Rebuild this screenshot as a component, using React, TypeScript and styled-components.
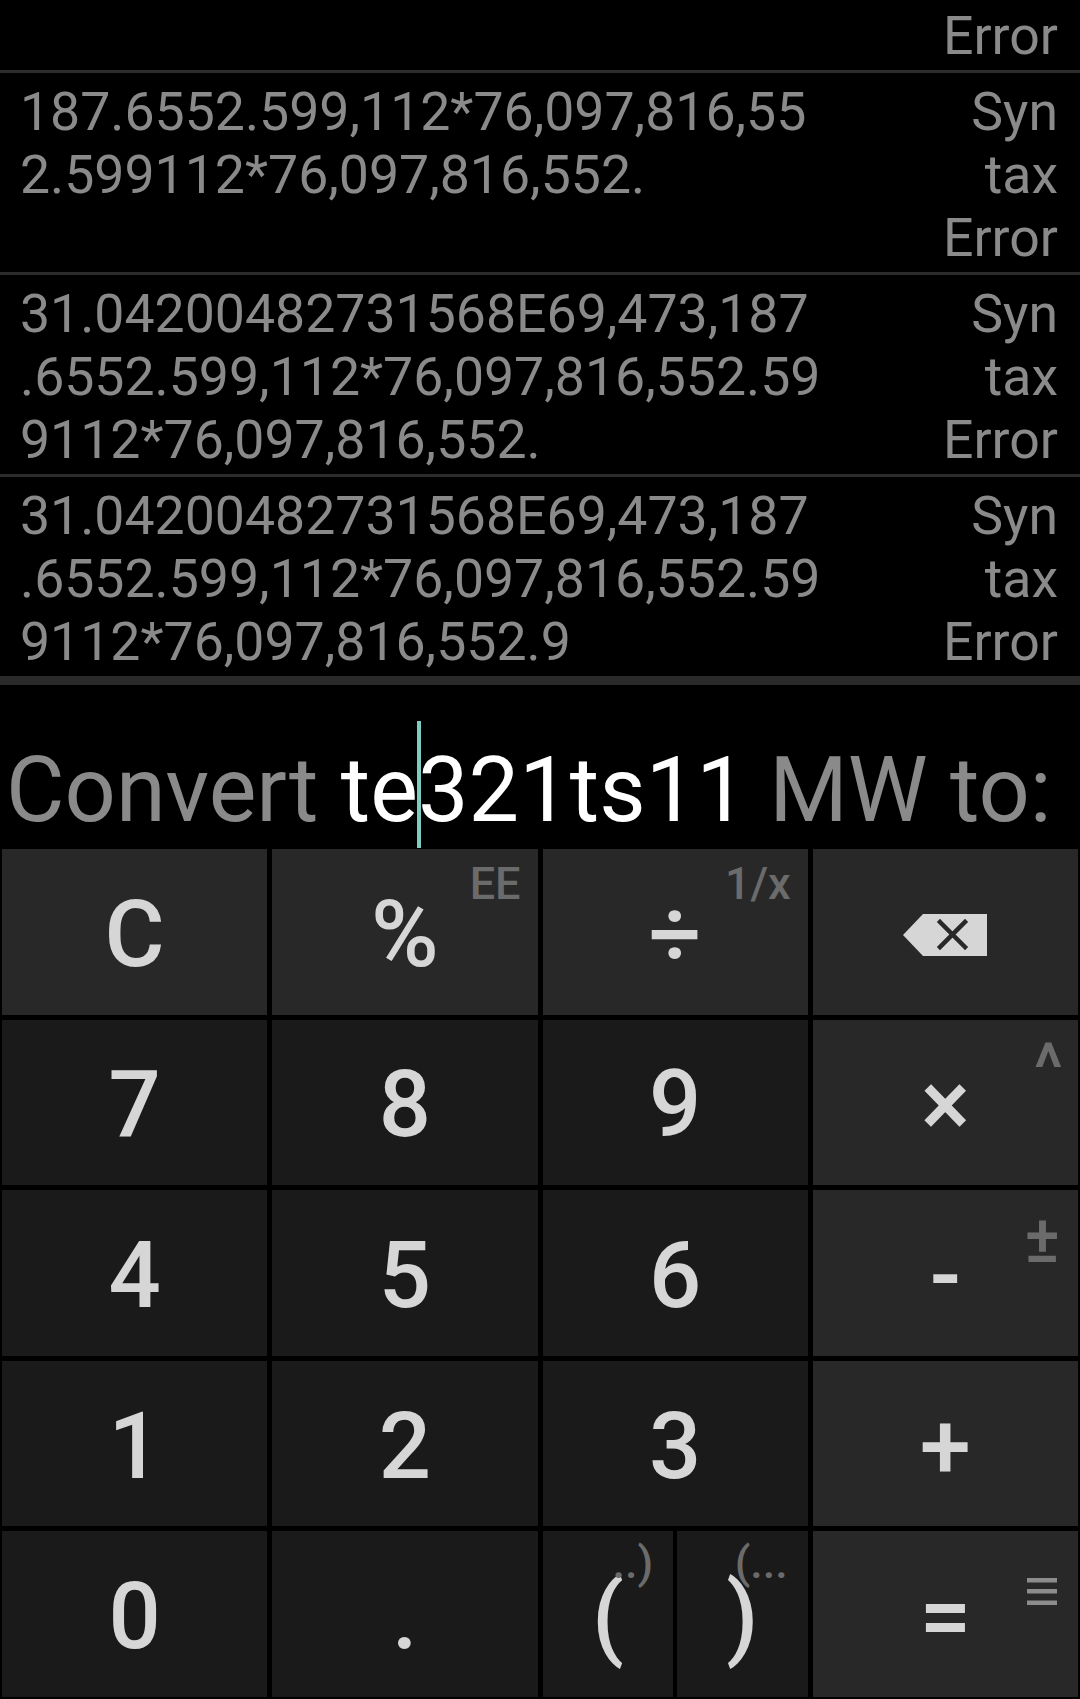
import React from "react";
import styled, { createGlobalStyle } from "styled-components";

const GlobalStyle = createGlobalStyle`
  html, body {
    margin: 0;
    padding: 0;
    background: #000;
  }
  body {
    font-family: Roboto, "Noto Sans", "Liberation Sans", sans-serif;
  }
`;

const history = [
  {
    lines: ["76,097,816,552.599112*76,097,8", "16,552.6"],
    result: "Syntax Error",
  },
  {
    lines: ["187.6552.599,112*76,097,816,55", "2.599112*76,097,816,552."],
    result: "Syntax Error",
  },
  {
    lines: [
      "31.04200482731568E69,473,187",
      ".6552.599,112*76,097,816,552.59",
      "9112*76,097,816,552.",
    ],
    result: "Syntax Error",
  },
  {
    lines: [
      "31.04200482731568E69,473,187",
      ".6552.599,112*76,097,816,552.59",
      "9112*76,097,816,552.9",
    ],
    result: "Syntax Error",
  },
];

const Screen = styled.div`
  width: 1080px;
  height: 1699px;
  display: flex;
  flex-direction: column;
  background: #000;
  overflow: hidden;
`;

const History = styled.div`
  height: 676px;
  flex-shrink: 0;
  display: flex;
  flex-direction: column;
  justify-content: flex-end;
  overflow: hidden;
  border-bottom: 9px solid #2a2a2a;
`;

const Row = styled.div`
  display: flex;
  flex-shrink: 0;
  border-top: 3px solid #2c2c2c;
  padding: 7px 22px 3px 20px;
  font-size: 53.6px;
  line-height: 63px;
  color: #8a8a8a;
`;

const Expression = styled.div`
  flex: 1;
  white-space: nowrap;
`;

const Result = styled.div`
  width: 118px;
  flex-shrink: 0;
  text-align: right;
`;

const Display = styled.div`
  height: 164px;
  flex-shrink: 0;
  display: flex;
  align-items: flex-end;
  padding: 0 0 6px 6px;
  box-sizing: border-box;
`;

const Input = styled.div`
  font-size: 90px;
  line-height: 105px;
  white-space: nowrap;
  color: #8a8a8a;
`;

const Typed = styled.span`
  color: #fff;
`;

const Caret = styled.span`
  position: relative;
  display: inline-block;
  width: 0;
  height: 0;

  &::after {
    content: "";
    position: absolute;
    left: -1px;
    bottom: -27px;
    width: 4px;
    height: 127px;
    background: #7ecbc2;
  }
`;

const Keypad = styled.div`
  flex: 1;
  display: grid;
  grid-template-columns: repeat(4, 1fr);
  grid-template-rows: repeat(5, 1fr);
  gap: 5px;
  padding: 0 2px 2px;
`;

const Key = styled.div<{ $op?: boolean }>`
  position: relative;
  display: flex;
  align-items: center;
  justify-content: center;
  padding-top: 6px;
  box-sizing: border-box;
  background: ${(p) => (p.$op ? "#282828" : "#1a1a1a")};
  color: #d6d6d6;
  font-size: 92px;
  font-weight: 500;
  line-height: 1;
`;

const Alt = styled.span<{
  $top?: number;
  $right?: number;
  $size?: number;
  $light?: boolean;
}>`
  position: absolute;
  top: ${(p) => p.$top ?? 9}px;
  right: ${(p) => p.$right ?? 17}px;
  font-size: ${(p) => p.$size ?? 45}px;
  font-weight: 500;
  line-height: 1.17;
  color: ${(p) => (p.$light ? "#8c8c8c" : "#6b6b6b")};
`;

const Split = styled.div`
  display: grid;
  grid-template-columns: 1fr 1fr;
  gap: 4px;
`;

const Backspace = () => (
  <svg width="84" height="42" viewBox="0 0 84 42">
    <polygon points="20,0 84,0 84,42 20,42 0,21" fill="#d6d6d6" />
    <path
      d="M37 8 L62 33 M62 8 L37 33"
      stroke="#282828"
      strokeWidth="4.5"
      strokeLinecap="square"
    />
  </svg>
);

const MenuBars = () => (
  <svg width="30" height="27" viewBox="0 0 30 27">
    <rect x="0" y="0" width="30" height="4.5" fill="#8c8c8c" />
    <rect x="0" y="11" width="30" height="4.5" fill="#8c8c8c" />
    <rect x="0" y="22.5" width="30" height="4.5" fill="#8c8c8c" />
  </svg>
);

const ResultText = ({ text }: { text: string }) => {
  if (text === "Syntax Error") {
    return (
      <>
        Syn
        <wbr />
        tax Error
      </>
    );
  }
  return <>{text}</>;
};

const App = () => {
  return (
    <>
      <GlobalStyle />
      <Screen>
        <History>
          {history.map((item, i) => (
            <Row key={i}>
              <Expression>
                {item.lines.map((line, j) => (
                  <div key={j}>{line}</div>
                ))}
              </Expression>
              <Result>
                <ResultText text={item.result} />
              </Result>
            </Row>
          ))}
        </History>

        <Display>
          <Input>
            Convert{" "}
            <Typed>
              te
              <Caret />
              321ts11
            </Typed>{" "}
            MW to:
          </Input>
        </Display>

        <Keypad>
          <Key $op>C</Key>
          <Key $op>
            %<Alt>EE</Alt>
          </Key>
          <Key $op>
            ÷<Alt>1/x</Alt>
          </Key>
          <Key $op>
            <Backspace />
          </Key>

          <Key>7</Key>
          <Key>8</Key>
          <Key>9</Key>
          <Key $op>
            ×
            <Alt $top={9} $right={15} $size={68}>
              ^
            </Alt>
          </Key>

          <Key>4</Key>
          <Key>5</Key>
          <Key>6</Key>
          <Key $op>
            -
            <Alt $top={11} $right={18} $size={66}>
              ±
            </Alt>
          </Key>

          <Key>1</Key>
          <Key>2</Key>
          <Key>3</Key>
          <Key $op>+</Key>

          <Key>0</Key>
          <Key>.</Key>
          <Split>
            <Key>
              (
              <Alt $top={6} $right={20}>
                ..)
              </Alt>
            </Key>
            <Key>
              )
              <Alt $top={6} $right={20}>
                (...
              </Alt>
            </Key>
          </Split>
          <Key $op>
            =
            <Alt $top={33} $right={21} $light>
              <MenuBars />
            </Alt>
          </Key>
        </Keypad>
      </Screen>
    </>
  );
};

export default App;
